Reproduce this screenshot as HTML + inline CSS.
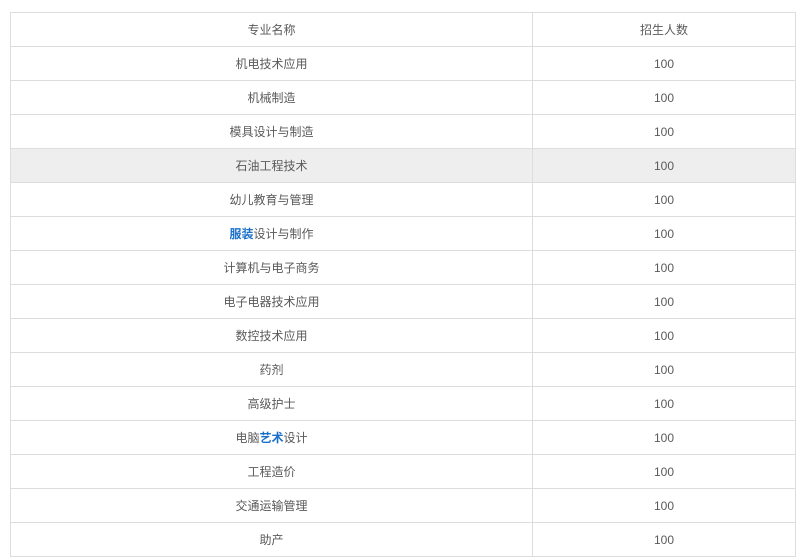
<!DOCTYPE html>
<html><head><meta charset="utf-8"><style>
body{margin:0;background:#fff;width:800px;height:560px;overflow:hidden}
table{position:absolute;left:10px;top:12px;width:786px;border-collapse:collapse;font-family:"Liberation Sans","Noto Sans CJK SC",sans-serif;font-size:12px;color:#5a5a5a}
td{border:1px solid #ddd;height:32px;padding:1px 0 0;text-align:center;line-height:32px}
td:first-child{width:521px}
tr.g td{background:#eee}
b{color:#1a6fc9;font-weight:bold}
</style></head><body>
<table>
<tr><td>专业名称</td><td>招生人数</td></tr>
<tr><td>机电技术应用</td><td>100</td></tr>
<tr><td>机械制造</td><td>100</td></tr>
<tr><td>模具设计与制造</td><td>100</td></tr>
<tr class="g"><td>石油工程技术</td><td>100</td></tr>
<tr><td>幼儿教育与管理</td><td>100</td></tr>
<tr><td><b>服装</b>设计与制作</td><td>100</td></tr>
<tr><td>计算机与电子商务</td><td>100</td></tr>
<tr><td>电子电器技术应用</td><td>100</td></tr>
<tr><td>数控技术应用</td><td>100</td></tr>
<tr><td>药剂</td><td>100</td></tr>
<tr><td>高级护士</td><td>100</td></tr>
<tr><td>电脑<b>艺术</b>设计</td><td>100</td></tr>
<tr><td>工程造价</td><td>100</td></tr>
<tr><td>交通运输管理</td><td>100</td></tr>
<tr><td>助产</td><td>100</td></tr>
</table>
</body></html>
